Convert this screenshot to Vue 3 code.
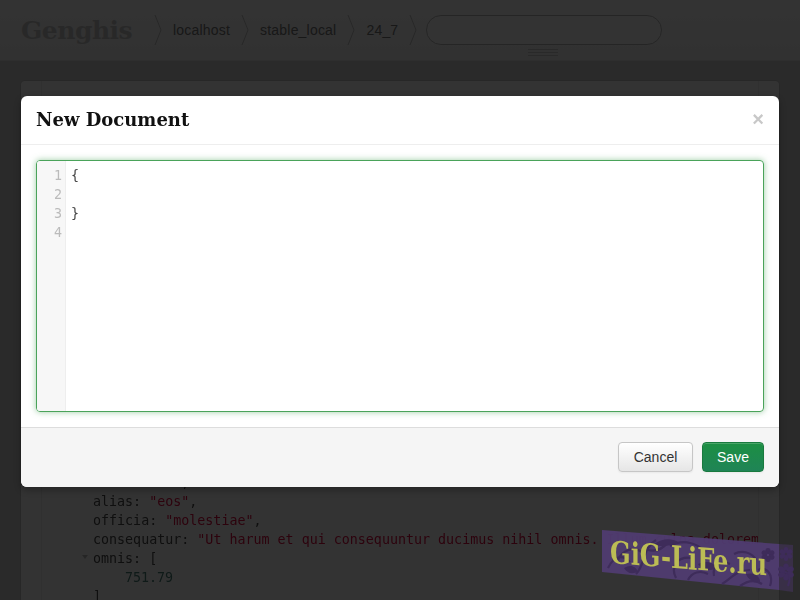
<script setup>
const crumbs = ['localhost', 'stable_local', '24_7']
const gutter = [1, 2, 3, 4]
const petals = [0, 60, 120, 180, 240, 300]
</script>

<template>
  <div class="page">
    <header class="navbar">
      <span class="brand">Genghis</span>
      <template v-for="c in crumbs" :key="c">
        <svg class="chev" width="8" height="32" viewBox="0 0 8 32"><path d="M1 1 L7 16 L1 31" /></svg>
        <span class="crumb">{{ c }}</span>
      </template>
      <svg class="chev last" width="8" height="32" viewBox="0 0 8 32"><path d="M1 1 L7 16 L1 31" /></svg>
      <div class="search">
        <div class="pill"></div>
        <div class="grip"><i></i><i></i><i></i></div>
      </div>
    </header>
    <main class="panel">
      <div class="doc">
        <div class="code">
          <div class="ln">nesciunt: <span class="num">4</span>,</div>
          <div class="ln">alias: <span class="str">"eos"</span>,</div>
          <div class="ln">officia: <span class="str">"molestiae"</span>,</div>
          <div class="ln">consequatur: <span class="str">"Ut harum et qui consequuntur ducimus nihil omnis. Illum culpa dolorem</span></div>
          <div class="ln fold">omnis: [</div>
          <div class="ln in"><span class="num">751.79</span></div>
          <div class="ln">]</div>
        </div>
      </div>
    </main>

    <div class="backdrop"></div>

    <section class="modal">
      <div class="m-head">
        <h3>New Document</h3>
        <span class="close">×</span>
      </div>
      <div class="m-body">
        <div class="editor">
          <div class="gutter"><div v-for="n in gutter" :key="n">{{ n }}</div></div>
          <div class="lines">
            <div>{</div>
            <div>&nbsp;</div>
            <div>}</div>
          </div>
        </div>
      </div>
      <div class="m-foot">
        <button class="btn">Cancel</button>
        <button class="btn save">Save</button>
      </div>
    </section>

    <svg class="stamp" width="192" height="64" viewBox="0 0 192 64">
      <polygon points="0,0 177,14 177,60 0,42" fill="#503b71" fill-opacity=".94" />
      <polygon points="177,14 191,15 191,62 177,60" fill="#392f47" />
      <g fill="none" stroke="#3e2c5a" stroke-width="2.2">
        <path d="M6 38 C12 26 20 24 28 32 M16 30 C20 20 32 16 40 22 M34 44 C44 34 40 18 54 10 M46 20 C54 22 60 20 66 12" />
        <path d="M68 16 C82 8 96 14 104 22 M74 48 C68 36 76 26 90 28 M86 50 C90 42 98 40 106 44 M112 46 C110 36 118 30 128 34" />
        <path d="M120 54 C130 48 134 40 148 40 M138 56 C146 50 154 50 160 54 M132 24 C140 20 150 22 154 30 M156 40 C164 36 172 44 168 56" />
        <path d="M178 44 C184 38 190 46 186 56" />
      </g>
      <g fill="#3e2c5a">
        <path d="M52 14 C60 8 70 8 76 12 C68 16 60 18 52 14Z" />
        <path d="M22 38 C28 34 34 36 36 42 C30 44 26 44 22 38Z" />
        <path d="M96 34 C104 30 112 32 114 38 C108 42 100 40 96 34Z" />
        <path d="M144 44 C152 42 158 46 158 52 C152 52 146 50 144 44Z" />
        <g v-for="p in petals" :key="p" :transform="`translate(166 25) rotate(${p})`"><ellipse cx="0" cy="-4" rx="2.6" ry="3" /></g>
        <g v-for="p in petals" :key="p + 'b'" :transform="`translate(184 24) rotate(${p})`"><ellipse cx="0" cy="-4" rx="2.4" ry="3" /></g>
        <g v-for="p in petals" :key="p + 'c'" :transform="`translate(184 42) rotate(${p})`"><ellipse cx="0" cy="-5" rx="2.8" ry="3.6" /></g>
      </g>
      <text class="stamp-text" transform="translate(8 33) skewY(4.5) scale(.93 1.2)">GiG-LiFe.ru</text>
    </svg>
  </div>
</template>

<style>
html, body { margin: 0; background: #d2d2d2; overflow: hidden; }
</style>

<style scoped>
.page {
  position: relative;
  width: 800px;
  height: 600px;
  overflow: hidden;
  background: #d2d2d2;
  font-family: "Liberation Sans", Arial, sans-serif;
}
.navbar {
  height: 61px;
  box-sizing: border-box;
  display: flex;
  align-items: center;
  padding: 0 0 0 21px;
  background: linear-gradient(#fff, #f4f4f4);
  border-bottom: 1px solid #e4e4e4;
}
.brand {
  font-family: "DejaVu Serif", serif;
  font-weight: 700;
  font-size: 25px;
  letter-spacing: -0.5px;
  color: #c8c8c8;
  width: 132px;
}
.chev { flex: none; margin-left: 1px; margin-right: 11px; }
.chev path { fill: none; stroke: #c4c4c4; stroke-width: 1; }
.chev.last { margin-right: 0; }
.crumb { font-size: 14px; color: #777; margin-right: 10px; letter-spacing: .2px; }
.search { position: relative; margin-left: 9px; }
.pill {
  width: 236px;
  height: 30px;
  box-sizing: border-box;
  border: 1px solid #bbb;
  border-radius: 15px;
  background: #fff;
}
.grip { position: absolute; left: 102px; top: 34px; width: 30px; }
.grip i { display: block; height: 1px; margin-bottom: 2px; background: #ccc; }
.panel {
  margin: 20px 21px 0;
  height: 520px;
  background: #fff;
  border-radius: 4px 4px 0 0;
  box-shadow: 0 0 0 1px #c4c4c4;
  padding: 0 20px;
}
.doc {
  height: 520px;
  padding-top: 392px;
  box-sizing: border-box;
  border-left: 1px solid #f0f0f0;
  border-right: 1px solid #f0f0f0;
  overflow: hidden;
  white-space: nowrap;
}
.code {
  padding-left: 51px;
  font: 13.33px/19px "DejaVu Sans Mono", monospace;
  color: #4a4a4a;
  will-change: opacity;
}
.str { color: #d14; }
.num { color: #4a8078; }
.in { padding-left: 32px; }
.fold { position: relative; }
.fold::before {
  content: "";
  position: absolute;
  left: -11px;
  top: 6px;
  border-left: 3.5px solid transparent;
  border-right: 3.5px solid transparent;
  border-top: 4px solid #bbb;
}
.backdrop { position: absolute; inset: 0; background: rgba(0, 0, 0, .8); }
.modal {
  position: absolute;
  left: 21px;
  top: 96px;
  width: 758px;
  height: 391px;
  display: flex;
  flex-direction: column;
  background: #fff;
  border-radius: 6px;
  box-shadow: 0 3px 7px rgba(0, 0, 0, .3);
  overflow: hidden;
  will-change: opacity;
}
.m-head {
  height: 49px;
  box-sizing: border-box;
  border-bottom: 1px solid #eee;
  padding: 0 15px 2px;
  display: flex;
  align-items: center;
  justify-content: space-between;
}
h3 {
  margin: 0;
  font-family: "DejaVu Serif", serif;
  font-weight: 700;
  font-size: 18px;
  color: #111;
}
.close { font-size: 20px; font-weight: 700; color: #c8c8c8; }
.m-body { padding: 15px; flex: 1; }
.editor {
  height: 252px;
  box-sizing: border-box;
  display: flex;
  border: 1px solid #4aa35a;
  border-radius: 4px;
  box-shadow: 0 0 6px rgba(74, 163, 90, .55);
  overflow: hidden;
  font: 13.33px/19px "DejaVu Sans Mono", monospace;
}
.gutter {
  width: 29px;
  box-sizing: border-box;
  padding: 5px 3px 0 0;
  text-align: right;
  color: #bbb;
  background: #f7f7f7;
  border-right: 1px solid #eee;
}
.lines { padding: 5px 0 0 5px; color: #444; }
.m-foot {
  height: 60px;
  box-sizing: border-box;
  display: flex;
  align-items: flex-start;
  justify-content: flex-end;
  gap: 9px;
  padding: 14px 15px 0;
  background: #f5f5f5;
  border-top: 1px solid #ddd;
}
.btn {
  height: 30px;
  width: 75px;
  padding: 0;
  font: 14px "Liberation Sans", Arial, sans-serif;
  color: #333;
  border: 1px solid #c6c6c6;
  border-radius: 4px;
  background: linear-gradient(#fff, #e6e6e6);
  box-shadow: inset 0 1px 0 rgba(255, 255, 255, .2), 0 1px 2px rgba(0, 0, 0, .05);
}
.btn.save {
  width: 62px;
  color: #fff;
  border-color: #197a3e;
  background: linear-gradient(#1c8f43, #1f8456);
}
.stamp { position: absolute; left: 602px; top: 530px; }
.stamp-text {
  font-family: "DejaVu Serif", serif;
  font-weight: 700;
  font-size: 26px;
  fill: #bcbc55;
}
</style>
